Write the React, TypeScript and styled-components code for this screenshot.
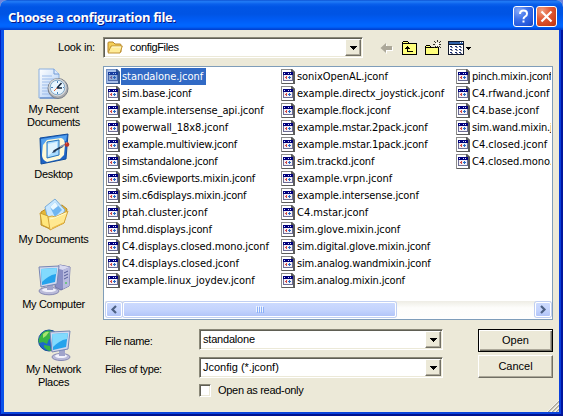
import React from "react";
import styled, { createGlobalStyle, css } from "styled-components";

const GlobalStyle = createGlobalStyle`
  * { box-sizing: border-box; }
  html, body { margin: 0; padding: 0; overflow: hidden; background: #6d83dd; }
  svg { display: block; flex: none; }
`;

const uiFont = css`
  font-family: "Liberation Sans", Arial, sans-serif;
  font-size: 11px;
  line-height: 13px;
  letter-spacing: -0.2px;
  color: #000;
`;

const Dialog = styled.div`
  width: 563px;
  height: 416px;
  display: flex;
  flex-direction: column;
  overflow: hidden;
  border-radius: 7px 7px 0 0;
  background: #ece9d8;
  user-select: none;
  ${uiFont}
`;

const TitleBar = styled.header`
  height: 30px;
  flex: none;
  display: flex;
  align-items: center;
  padding: 3px 6px 0 8px;
  gap: 2px;
  background: linear-gradient(
    180deg,
    #0a48c8 0,
    #1f78f4 1px,
    #1f78f4 2px,
    #0a60ec 4px,
    #0055e5 7px,
    #0054e4 14px,
    #005cf5 20px,
    #0066ff 25px,
    #0062fb 27px,
    #0045d6 29px,
    #0040d0 30px
  );
`;

const Title = styled.h1`
  flex: 1;
  margin: 0;
  font-family: "Open Sans", "Noto Sans", sans-serif;
  font-size: 13px;
  font-weight: 700;
  line-height: 18px;
  letter-spacing: -0.35px;
  color: #fff;
  text-shadow: 1px 1px 0 #0a1883;
  white-space: nowrap;
`;

const CaptionButton = styled.button<{ $close?: boolean }>`
  width: 21px;
  height: 21px;
  padding: 0;
  border: 1px solid #fff;
  border-radius: 3px;
  display: grid;
  place-items: center;
  background: ${(p) =>
    p.$close
      ? "radial-gradient(circle at 25% 20%, #f0a080 0, #e25b38 40%, #d0421c 75%, #b83410 100%)"
      : "radial-gradient(circle at 25% 20%, #86a9f8 0, #3f72ea 40%, #2458dc 75%, #1943b4 100%)"};
`;

const Frame = styled.div`
  flex: 1;
  display: flex;
  border-style: solid;
  border-width: 0 2px 2px 1px;
  border-color: #0018a8 #0016a0 #00128e #0020c0;
`;

const Body = styled.div`
  flex: 1;
  min-width: 0;
  display: flex;
  flex-direction: column;
  border-style: solid;
  border-width: 0 2px 2px 3px;
  border-color: #0a4be0 #0a3fdc #0a44dc #0a52ea;
  background: #ece9d8;
`;

const LookRow = styled.div`
  height: 36px;
  flex: none;
  display: flex;
  align-items: center;
  padding: 0 0 1px 54px;
`;

const LookLabel = styled.label`
  width: 45px;
`;

const Combo = styled.div<{ $width: number; $height: number }>`
  width: ${(p) => p.$width}px;
  height: ${(p) => p.$height}px;
  flex: none;
  display: flex;
  align-items: stretch;
  background: #fff;
  border: 1px solid;
  border-color: #8a8878 #fff #fff #8a8878;
  box-shadow: inset 1px 1px 0 #5f5e54, inset -1px -1px 0 #ece9d8;
  padding: 1px;
`;

const ComboValue = styled.span<{ $spacing?: number }>`
  flex: 1;
  display: flex;
  align-items: center;
  gap: 7px;
  padding-left: 2px;
  letter-spacing: ${(p) => p.$spacing ?? -0.2}px;
`;

const DropButton = styled.button`
  width: 16px;
  padding: 0;
  display: grid;
  place-items: center;
  background: #ece9d8;
  border: 1px solid;
  border-color: #fff #716f64 #716f64 #fff;
  box-shadow: inset -1px -1px 0 #aca899;
`;

const Tools = styled.div`
  display: flex;
  align-items: center;
  margin-left: 17px;
`;

const Spacer = styled.span<{ $width: number }>`
  width: ${(p) => p.$width}px;
`;

const Columns = styled.div`
  flex: 1;
  display: flex;
  min-height: 0;
`;

const Places = styled.nav`
  width: 99px;
  flex: none;
  display: flex;
  flex-direction: column;
  padding-top: 2px;
`;

const Place = styled.div`
  height: 65px;
  flex: none;
  display: flex;
  flex-direction: column;
  align-items: center;
  gap: 2px;
  text-align: center;
  white-space: pre;
`;

const PlaceIcon = styled.span`
  height: 33px;
  flex: none;
`;

const PlaceLabel = styled.span`
  letter-spacing: -0.3px;
`;

const Content = styled.main`
  width: 450px;
  display: flex;
  flex-direction: column;
`;

const ListBox = styled.section`
  height: 254px;
  flex: none;
  display: flex;
  flex-direction: column;
  background: #fff;
  border: 1px solid #7f9db9;
  padding: 1px;
`;

const FileColumns = styled.div`
  flex: 1;
  display: grid;
  grid-template-columns: 175px 175px 96px;
  align-items: start;
  overflow: hidden;
  padding-left: 1px;
`;

const FileColumn = styled.ul`
  margin: 0;
  padding: 0;
  list-style: none;
`;

const FileRow = styled.li`
  height: 17px;
  display: flex;
  align-items: center;
  white-space: nowrap;
`;

const FileName = styled.span<{ $selected?: boolean; $spacing: number }>`
  height: 17px;
  padding: 0 3px 0 1px;
  font-family: "DejaVu Sans Condensed", "DejaVu Sans", sans-serif;
  font-stretch: condensed;
  font-size: 11px;
  line-height: 17px;
  letter-spacing: ${(p) => p.$spacing}px;
  color: ${(p) => (p.$selected ? "#fff" : "#000")};
  background: ${(p) => (p.$selected ? "#316ac5" : "transparent")};
`;

const ScrollBar = styled.div`
  height: 17px;
  flex: none;
  display: flex;
  gap: 1px;
  padding: 1px 0 0 1px;
  background: linear-gradient(#eeede5, #fdfdfb 40%, #fefefc);
`;

const scrollSurface = css`
  height: 15px;
  border: 1px solid #fff;
  border-radius: 2px;
  background: linear-gradient(#ccdafe, #c3d3fd 55%, #b2c5f8);
  box-shadow: 0 0 0 1px #c0cff2;
`;

const ScrollButton = styled.button`
  width: 16px;
  padding: 0;
  display: grid;
  place-items: center;
  ${scrollSurface}
`;

const ScrollThumb = styled.div`
  width: 273px;
  display: grid;
  place-items: center;
  ${scrollSurface}
`;

const ScrollTrack = styled.div`
  flex: 1;
`;

const Form = styled.div`
  display: grid;
  grid-template-columns: 96px 279px 75px;
  grid-template-rows: 28px 26px 14px;
  padding-top: 9px;
`;

const FieldLabel = styled.label`
  padding: 6px 0 0 2px;
  letter-spacing: -0.4px;
`;

const PushButton = styled.button<{ $primary?: boolean }>`
  width: 75px;
  height: 23px;
  padding: 0 0 1px;
  ${uiFont}
  letter-spacing: 0;
  background: #ece9d8;
  border: 1px solid;
  border-color: ${(p) => (p.$primary ? "#000" : "#fff #716f64 #716f64 #fff")};
  box-shadow: ${(p) =>
    p.$primary
      ? "inset 1px 1px 0 #fff, inset -1px -1px 0 #716f64, inset -2px -2px 0 #aca899"
      : "inset -1px -1px 0 #aca899"};
  margin-top: ${(p) => (p.$primary ? 0 : -2)}px;
`;

const CheckRow = styled.label`
  grid-column: 2;
  display: flex;
  align-items: center;
  gap: 7px;
  letter-spacing: -0.3px;
`;

const CheckBox = styled.span`
  width: 12px;
  height: 13px;
  background: #fff;
  border: 1px solid;
  border-color: #8a8878 #fff #fff #8a8878;
  box-shadow: inset 1px 1px 0 #5f5e54, inset -1px -1px 0 #ece9d8;
`;

const FooterStrip = styled.div`
  height: 12px;
  flex: none;
  display: flex;
  justify-content: flex-end;
  align-items: flex-end;
  margin-top: -12px;
`;

const Arrow = () => (
  <svg width="7" height="4" shapeRendering="crispEdges">
    <path d="M0 0h7v1h-1v1h-1v1h-1v1h-1v-1h-1v-1h-1v-1h-1z" fill="#000" />
  </svg>
);

const FileIcon = ({ selected }: { selected?: boolean }) => (
  <svg width="15" height="17" viewBox="0 0 15 17" shapeRendering="crispEdges">
    <path d="M0 1h11l3 3v12H0z" fill={selected ? "#7391c4" : "#8c8c8c"} />
    <path d="M1 2h9v3h2v10H1z" fill={selected ? "#a6bee8" : "#fff"} />
    <path d="M10 1h1v1h1v1h1v1h1v12H1v-1h11V5h-2z" fill={selected ? "#35568f" : "#5c5c5c"} />
    <path d="M2 4h10v9H2z" fill={selected ? "#4b68ac" : "#6c6c94"} />
    <path d="M2 4h10v3H2z" fill={selected ? "#173b9c" : "#00007c"} />
    <path d="M3 7h8v5H3z" fill={selected ? "#91add8" : "#f3f0f5"} />
    <path d="M3 5h1v1H3zM7 5h1v1H7zM9 5h1v1H9z" fill={selected ? "#9bb6eb" : "#dce2ff"} />
    <path d="M4 9h1V8h1v3H5v-1H4z" fill={selected ? "#735f9c" : "#d34a48"} />
    <path d="M8 8h1v1h1v1H9v1H8v-1H7V9h1z" fill={selected ? "#2762bb" : "#2469c8"} />
  </svg>
);

const FolderIcon = () => (
  <svg width="16" height="15" viewBox="0 0 16 15">
    <path d="M1 12V3q0-1 1-1h4l2 2h5q1 0 1 1v7z" fill="#f4cf58" stroke="#b8862b" />
    <path d="M1 13L4 6h11.3L13 13z" fill="#ffec98" stroke="#c09336" strokeLinejoin="round" />
    <path d="M5 7h9" stroke="#fffad8" />
  </svg>
);

const BackIcon = () => (
  <svg width="14" height="12" viewBox="0 0 14 12">
    <path d="M7 2v3h6v4H7v3L2 7z" fill="#fff" />
    <path d="M6 1v3h6v4H6v3L0.500 6z" fill="#aca899" />
  </svg>
);

const UpIcon = () => (
  <svg width="15" height="14" viewBox="0 0 15 14" shapeRendering="crispEdges">
    <path d="M1 0h5v1h1v1h8v12H0V1h1z" fill="#000" />
    <path d="M1 2V1h5v1zM1 3h13v10H1z" fill="#ffff7c" />
    <path d="M5 5h1v1h1v1h1v1H6v2h5v1H5V8H3V7h1V6h1z" fill="#000" />
  </svg>
);

const NewFolderIcon = () => (
  <svg width="17" height="16" viewBox="0 0 17 16" shapeRendering="crispEdges">
    <path d="M1 5h4v1h1v1h8v8H0V6h1z" fill="#000" />
    <path d="M1 6h4v1H1zM1 8h12v6H1z" fill="#ffff7c" />
    <path
      d="M12 0h1v2h-1zM12 6h1v2h-1zM8 4h2v1H8zM14 4h2v1h-2zM9 1h1v1H9zM10 2h1v1h-1zM15 1h1v1h-1zM14 2h1v1h-1zM10 6h1v1h-1zM9 7h1v1H9zM14 6h1v1h-1zM15 7h1v1h-1z"
      fill="#33332c"
    />
    <path d="M11 3h1v1h-1zM13 3h1v1h-1zM12 4h1v1h-1zM11 5h1v1h-1zM13 5h1v1h-1z" fill="#fff" />
  </svg>
);

const ViewIcon = () => (
  <svg width="23" height="14" viewBox="0 0 23 14" shapeRendering="crispEdges">
    <path d="M0 0h16v14H0z" fill="#10182c" />
    <path d="M1 1h14v2H1z" fill="#2f62a8" />
    <path d="M12 1h1v1h-1zM14 1h1v1h-1z" fill="#fff" />
    <path d="M1 4h14v9H1z" fill="#fff" />
    {[5, 8, 11].map((y) =>
      [2, 7, 11].map((x) => (
        <React.Fragment key={`${x}-${y}`}>
          <rect x={x} y={y} width="2" height="1" fill="#172d75" />
          <rect x={x + 1} y={y + 1} width="2" height="1" fill="#7d8392" />
        </React.Fragment>
      ))
    )}
    <path d="M18 6h5v1h-1v1h-1v1h-1V8h-1V7h-1z" fill="#000" />
  </svg>
);

const RecentIcon = () => (
  <svg width="32" height="32" viewBox="0 0 32 32">
    <defs>
      <linearGradient id="paper" x2="1" y2="1">
        <stop stopColor="#fff" />
        <stop offset="1" stopColor="#a9caf5" />
      </linearGradient>
    </defs>
    <path d="M1 1h15l5 5v24H1z" fill="url(#paper)" stroke="#8aaede" />
    <path d="M16 1v5h5" fill="#dceaff" stroke="#739bd4" />
    <path d="M4 8h10M4 11h12M4 14h9M4 17h7M4 20h6M4 23h6M4 26h8" stroke="#9dbcea" />
    <path d="M2 30h18" stroke="#4a78c0" />
    <circle cx="20" cy="20.5" r="10" fill="#a7a9ad" stroke="#777e89" />
    <circle cx="19.5" cy="19.5" r="9" fill="#d5d7d9" />
    <circle cx="19.5" cy="19.5" r="7.3" fill="#e8f6ff" stroke="#80a7c6" />
    <path d="M19 20l4.5-5M19 20h5" stroke="#17273d" strokeWidth="1.5" />
    <path d="M19.5 13v2M19.5 24v2M13 19.5h2M25 19.5h1" stroke="#4a84be" />
    <path d="M19 20l-3 3" stroke="#e76a36" />
  </svg>
);

const DesktopIcon = () => (
  <svg width="34" height="32" viewBox="0 0 34 32">
    <path d="M3 5l28-4-2 25-25 5z" fill="#1f64c6" stroke="#114d9d" />
    <path d="M4 6l26-4-1 6C20 8 11 14 5 24z" fill="#53a1ef" />
    <path d="M10 7l14-2q4 1 4 7l-1 10-4 4-13 3q-5-2-5-7l1-10z" fill="#fff9d6" />
    <path d="M10 9l12-2v15l-12 3z" fill="#a9dcff" stroke="#2473bd" />
    <path d="M11 11l9-2v6l-9 8z" fill="#dff4ff" />
    <path d="M17 18l9-5" stroke="#213650" strokeWidth="1.8" />
    <path d="M17 17l-2 3 4-1z" fill="#253c5d" />
    <path d="M23 14l6-3" stroke="#8797b4" strokeWidth="1.8" />
    <circle cx="30" cy="11.5" r="2.3" fill="#bf3526" />
    <path d="M29 10h1" stroke="#ff9a7f" />
  </svg>
);

const DocumentsIcon = () => (
  <svg width="32" height="33" viewBox="0 0 32 33">
    <path d="M3 14l5-3 3 1 13-5 5 4-3 14-14 6-9-4z" fill="#e5b735" stroke="#bb8a24" />
    <path d="M7 9L17 1l10 11-7 14-10-4z" fill="#c6e6ff" stroke="#7badd8" />
    <path d="M12 9l5-5 7 8-7 7z" fill="#70b6f1" />
    <path d="M12 9l5-5 3 4-5 4z" fill="#eaf8ff" />
    <path d="M2 15l8 3 3 13-9-4z" fill="#ffe67c" stroke="#c99c31" />
    <path d="M10 19l4-1 3 1 13-6-4 12-14 7z" fill="#ffe991" stroke="#d4a43c" strokeLinejoin="round" />
    <path d="M12 21l4-1 12-5" fill="none" stroke="#fffbd3" />
    <path d="M14 30l11-5" stroke="#edbc43" />
  </svg>
);

const Screen = () => (
  <>
    <path d="M0 1l20-1-2 18L2 21z" fill="#d1d8ee" stroke="#7886b4" />
    <path d="M2 3l16-1-2 14-13 3z" fill="#25a3ec" />
    <path d="M2 3l16-1-1 6C11 9 7 12 3 16z" fill="#82dafd" />
  </>
);

const ComputerIcon = () => (
  <svg width="34" height="33" viewBox="0 0 34 33">
    <path d="M18 5l5-3 10 2-1 19-8 4-6-3z" fill="#8a8ec4" stroke="#6a6ea7" />
    <path d="M18 5l5-3 10 2-7 3z" fill="#d9daf0" />
    <path d="M26 7l7-3-1 19-6 3z" fill="#b9bbdf" />
    <path d="M27 10l4-2M27 13l4-2M27 16l4-2" stroke="#555e9c" />
    <circle cx="29" cy="20" r="1" fill="#59c568" />
    <ellipse cx="12" cy="28" rx="10" ry="3.8" fill="#babbd9" stroke="#8588b3" />
    <ellipse cx="12" cy="27" rx="7" ry="2" fill="#f0f0fb" />
    <path d="M10 20l7-1-1 8h-6z" fill="#a0a4cb" />
    <g transform="translate(2 3)">
      <Screen />
    </g>
  </svg>
);

const NetworkIcon = () => (
  <svg width="34" height="34" viewBox="0 0 34 34">
    <circle cx="12" cy="12.5" r="10.5" fill="#1c68ca" stroke="#16509a" />
    <path d="M4 7c3-5 8-5 11-4l-2 4 3 3-4 1-2 5-4-2-4 1c-1-3 0-5 2-8zM7 17l6 1 1 5q-4 0-7-4zM17 3l4 4-4 1z" fill="#38b445" />
    <path d="M6 6q3-3 6-2l-3 4-3 2z" fill="#a9e56f" />
    <ellipse cx="24" cy="29" rx="9" ry="3.5" fill="#babbd9" stroke="#8588b3" />
    <ellipse cx="24" cy="28" rx="6" ry="2" fill="#f3f3fc" />
    <path d="M22 20l6-1v9h-6z" fill="#a0a4cb" />
    <g transform="translate(13 3)">
      <Screen />
    </g>
  </svg>
);

const Chevron = ({ right }: { right?: boolean }) => (
  <svg width="8" height="9" viewBox="0 0 8 9">
    <path d={right ? "M2 1l3.5 3.5L2 8" : "M6 1L2.5 4.5 6 8"} fill="none" stroke="#4d6185" strokeWidth="2.2" />
  </svg>
);

const Grip = () => (
  <svg width="12" height="12" viewBox="0 0 12 12">
    <path d="M1 12L12 1M5 12l7-7M9 12l3-3" stroke="#aca899" strokeWidth="1.6" />
    <path d="M0 12L12 0M4 12l8-8M8 12l4-4" stroke="#fff" strokeWidth="0.8" />
  </svg>
);

const ThumbGrip = () => (
  <svg width="8" height="7" shapeRendering="crispEdges">
    {[0, 2, 4, 6].map((x) => (
      <React.Fragment key={x}>
        <rect x={x} width="1" height="6" fill="#eef4fe" />
        <rect x={x + 1} y="1" width="1" height="6" fill="#8cb0f8" />
      </React.Fragment>
    ))}
  </svg>
);

type FileEntry = [name: string, spacing: number];

const files: FileEntry[][] = [
  [
    ["standalone.jconf", -0.06],
    ["sim.base.jconf", -0.14],
    ["example.intersense_api.jconf", -0.11],
    ["powerwall_18x8.jconf", -0.05],
    ["example.multiview.jconf", -0.21],
    ["simstandalone.jconf", -0.21],
    ["sim.c6viewports.mixin.jconf", -0.19],
    ["sim.c6displays.mixin.jconf", -0.23],
    ["ptah.cluster.jconf", 0],
    ["hmd.displays.jconf", -0.17],
    ["C4.displays.closed.mono.jconf", -0.1],
    ["C4.displays.closed.jconf", -0.08],
    ["example.linux_joydev.jconf", -0.04],
  ],
  [
    ["sonixOpenAL.jconf", -0.06],
    ["example.directx_joystick.jconf", -0.08],
    ["example.flock.jconf", -0.16],
    ["example.mstar.2pack.jconf", -0.12],
    ["example.mstar.1pack.jconf", -0.12],
    ["sim.trackd.jconf", -0.12],
    ["example.vrpn.jconf", 0],
    ["example.intersense.jconf", -0.12],
    ["C4.mstar.jconf", 0],
    ["sim.glove.mixin.jconf", -0.1],
    ["sim.digital.glove.mixin.jconf", -0.21],
    ["sim.analog.wandmixin.jconf", -0.19],
    ["sim.analog.mixin.jconf", -0.18],
  ],
  [
    ["pinch.mixin.jconf", -0.28],
    ["C4.rfwand.jconf", 0],
    ["C4.base.jconf", 0],
    ["sim.wand.mixin.jconf", -0.2],
    ["C4.closed.jconf", 0],
    ["C4.closed.mono.jconf", -0.1],
  ],
];

const places = [
  { label: "My Recent\nDocuments", Icon: RecentIcon },
  { label: "Desktop", Icon: DesktopIcon },
  { label: "My Documents", Icon: DocumentsIcon },
  { label: "My Computer", Icon: ComputerIcon },
  { label: "My Network\nPlaces", Icon: NetworkIcon },
];

export default function App() {
  return (
    <>
      <GlobalStyle />
      <Dialog>
        <TitleBar>
          <Title>Choose a configuration file.</Title>
          <CaptionButton aria-label="Help">
            <svg width="13" height="15" viewBox="0 0 13 15">
              <path d="M3 5q0-3.500 3.500-3.500T10 4.700q0 2-2 3-1.500.8-1.500 2.500" fill="none" stroke="#fff" strokeWidth="2" />
              <path d="M5.500 11.500h2v2h-2z" fill="#fff" />
            </svg>
          </CaptionButton>
          <CaptionButton $close aria-label="Close">
            <svg width="13" height="13" viewBox="0 0 13 13">
              <path d="M1.500 1.500l10 10M11.500 1.500l-10 10" stroke="#fff" strokeWidth="2.2" />
            </svg>
          </CaptionButton>
        </TitleBar>
        <Frame>
          <Body>
            <LookRow>
              <LookLabel>Look in:</LookLabel>
              <Combo $width={260} $height={21}>
                <ComboValue $spacing={-0.35}>
                  <FolderIcon />
                  configFiles
                </ComboValue>
                <DropButton>
                  <Arrow />
                </DropButton>
              </Combo>
              <Tools>
                <BackIcon />
                <Spacer $width={8} />
                <UpIcon />
                <Spacer $width={8} />
                <NewFolderIcon />
                <Spacer $width={6} />
                <ViewIcon />
              </Tools>
            </LookRow>
            <Columns>
              <Places>
                {places.map(({ label, Icon }) => (
                  <Place key={label}>
                    <PlaceIcon>
                      <Icon />
                    </PlaceIcon>
                    <PlaceLabel>{label}</PlaceLabel>
                  </Place>
                ))}
              </Places>
              <Content>
                <ListBox>
                  <FileColumns>
                    {files.map((column, c) => (
                      <FileColumn key={c}>
                        {column.map(([name, spacing], r) => (
                          <FileRow key={name}>
                            <FileIcon selected={c === 0 && r === 0} />
                            <FileName $spacing={spacing} $selected={c === 0 && r === 0}>
                              {name}
                            </FileName>
                          </FileRow>
                        ))}
                      </FileColumn>
                    ))}
                  </FileColumns>
                  <ScrollBar>
                    <ScrollButton>
                      <Chevron />
                    </ScrollButton>
                    <ScrollThumb>
                      <ThumbGrip />
                    </ScrollThumb>
                    <ScrollTrack />
                    <ScrollButton>
                      <Chevron right />
                    </ScrollButton>
                  </ScrollBar>
                </ListBox>
                <Form>
                  <FieldLabel>File name:</FieldLabel>
                  <Combo $width={244} $height={21}>
                    <ComboValue>standalone</ComboValue>
                    <DropButton>
                      <Arrow />
                    </DropButton>
                  </Combo>
                  <PushButton $primary>Open</PushButton>
                  <FieldLabel>Files of type:</FieldLabel>
                  <Combo $width={244} $height={21}>
                    <ComboValue $spacing={0}>Jconfig (*.jconf)</ComboValue>
                    <DropButton>
                      <Arrow />
                    </DropButton>
                  </Combo>
                  <PushButton>Cancel</PushButton>
                  <CheckRow>
                    <CheckBox />
                    Open as read-only
                  </CheckRow>
                </Form>
              </Content>
            </Columns>
            <FooterStrip>
              <Grip />
            </FooterStrip>
          </Body>
        </Frame>
      </Dialog>
    </>
  );
}
